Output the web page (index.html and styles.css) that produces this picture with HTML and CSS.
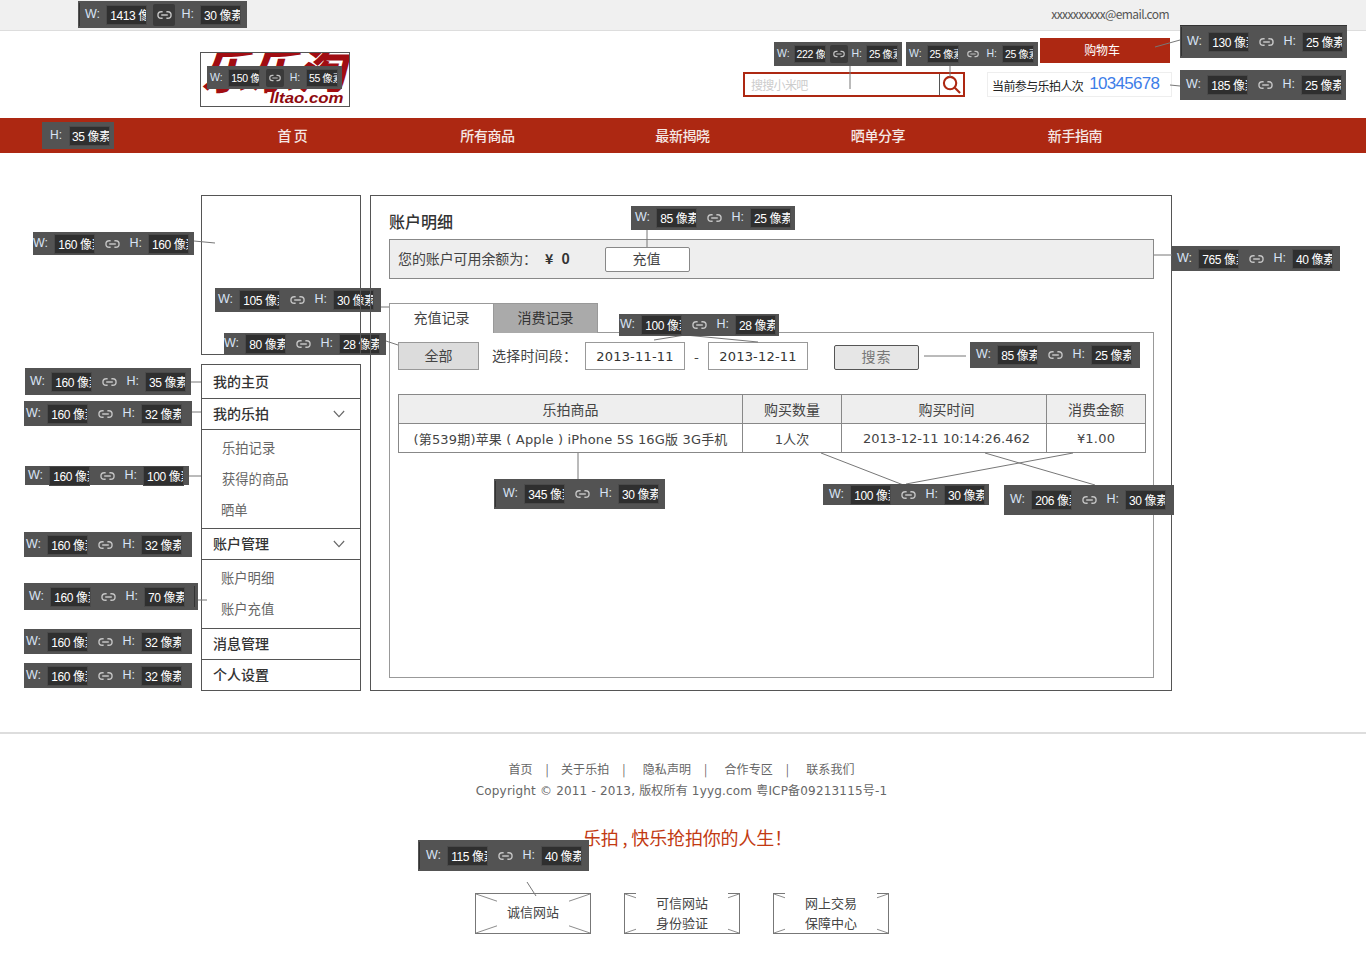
FILE: index.html
```html
<!DOCTYPE html>
<html lang="zh-CN">
<head>
<meta charset="utf-8">
<title>账户明细</title>
<link rel="stylesheet" href="styles.css">
</head>
<body>
<div class="page">
  <div class="topbar"><span class="email">xxxxxxxxxx@email.com</span></div>

  <header class="header">
    <div class="logo"><span class="logo-cn">乐乐淘</span><span class="logo-en">lltao.com</span></div>
    <div class="header-right">
      <div class="cart">购物车</div>
      <div class="header-row">
        <div class="search">
          <span class="search-text">搜搜小米吧</span>
          <span class="search-btn">
            <svg class="search-icon" viewBox="0 0 20 20"><circle cx="8.5" cy="8.500" r="6.500"/><path d="M13.500 13.500L19 19"/></svg>
          </span>
        </div>
        <div class="counter"><span class="counter-label">当前参与乐拍人次</span><span class="counter-num">10345678</span></div>
      </div>
    </div>
  </header>

  <nav class="nav">
    <a class="nav-item">首 页</a>
    <a class="nav-item">所有商品</a>
    <a class="nav-item">最新揭晓</a>
    <a class="nav-item nav-shift1">晒单分享</a>
    <a class="nav-item nav-shift2">新手指南</a>
  </nav>

  <div class="content">
    <aside class="sidebar">
      <div class="avatar frame"></div>
      <div class="menu">
        <div class="menu-head menu-home"><span class="mt">我的主页</span></div>
        <div class="menu-head"><span class="mt">我的乐拍</span><svg class="chev" viewBox="0 0 14 9"><path d="M1 1l6 6.500L13 1"/></svg></div>
        <ul class="menu-list list-a">
          <li>乐拍记录</li>
          <li>获得的商品</li>
          <li class="li-tight">晒单</li>
        </ul>
        <div class="menu-head"><span class="mt">账户管理</span><svg class="chev" viewBox="0 0 14 9"><path d="M1 1l6 6.500L13 1"/></svg></div>
        <ul class="menu-list list-b">
          <li class="li-tight">账户明细</li>
          <li class="li-tight">账户充值</li>
        </ul>
        <div class="menu-head"><span class="mt">消息管理</span></div>
        <div class="menu-head menu-last"><span class="mt">个人设置</span></div>
      </div>
    </aside>

    <main class="main frame">
      <h1 class="title">账户明细</h1>
      <div class="balance">
        <span class="balance-label">您的账户可用余额为<span class="cc">：</span></span>
        <span class="balance-num">¥&nbsp;&nbsp;0</span>
        <button class="recharge">充值</button>
      </div>
      <div class="tabs">
        <div class="tab tab-on">充值记录</div>
        <div class="tab tab-off">消费记录</div>
      </div>
      <div class="panel">
        <div class="filter">
          <button class="all">全部</button>
          <span class="filter-label">选择时间段<span class="cc">：</span></span>
          <span class="date">2013-11-11</span>
          <span class="dash">-</span>
          <span class="date">2013-12-11</span>
          <button class="search-go">搜索</button>
        </div>
        <table class="records">
          <thead>
            <tr><th class="c1">乐拍商品</th><th class="c2">购买数量</th><th class="c3">购买时间</th><th class="c4">消费金额</th></tr>
          </thead>
          <tbody>
            <tr><td class="cell-name">(第539期)苹果 ( Apple ) iPhone 5S 16G版 3G手机</td><td>1人次</td><td class="cell-time">2013-12-11 10:14:26.462</td><td class="cell-money">¥1.00</td></tr>
          </tbody>
        </table>
      </div>
    </main>
  </div>

  <footer class="footer">
    <div class="foot-links">
      <a>首页</a><i class="sep sep-a">|</i><a>关于乐拍</a><i class="sep">|</i><a>隐私声明</a><i class="sep">|</i><a>合作专区</a><i class="sep">|</i><a>联系我们</a>
    </div>
    <p class="copy">Copyright © 2011 - 2013, 版权所有 1yyg.com 粤ICP备09213115号-1</p>
    <p class="slogan">乐拍 , 快乐抢拍你的人生！</p>
    <div class="trust">
      <div class="trust-box">
        <svg class="x" viewBox="0 0 116 41" preserveAspectRatio="none"><path d="M0 0L116 41M116 0L0 41"/></svg>
        <span class="trust-text t-wide">诚信网站</span>
      </div>
      <div class="trust-box">
        <svg class="x" viewBox="0 0 116 41" preserveAspectRatio="none"><path d="M0 0L116 41M116 0L0 41"/></svg>
        <span class="trust-text">可信网站<br>身份验证</span>
      </div>
      <div class="trust-box">
        <svg class="x" viewBox="0 0 116 41" preserveAspectRatio="none"><path d="M0 0L116 41M116 0L0 41"/></svg>
        <span class="trust-text">网上交易<br>保障中心</span>
      </div>
    </div>
  </footer>

  <!-- measurement overlay -->
  <svg class="wires" viewBox="0 0 1366 980">
    <path d="M850 66V89M950 66V77M1155 47L1180 40M1170 85L1180 86"/>
    <path d="M194 241L215 243M381 307H389M386 341L398 345M191 382H201M192 412H201M189 476H201M198 600H207"/>
    <path d="M647 230V247M1154 255H1172M924 356H966M654 340L685 335L758 342"/>
    <path d="M578 453V479M821 453L906 486M1073 453L906 484M985 453L1095 485M527 882L536 896"/>
  </svg>

  <div class="dim b-top edge"><span class="k">W:</span><span class="v">1413 像素</span><span class="lk on"><svg viewBox="0 0 16 10"><path d="M6 1.500H4.500a3.500 3.500 0 000 7H6M10 1.500h1.500a3.500 3.500 0 010 7H10M4.500 5h7"/></svg></span><span class="k">H:</span><span class="v">30 像素</span></div>
  <div class="dim tiny b-logo"><span class="k">W:</span><span class="v">150 像素</span><span class="lk on"><svg viewBox="0 0 16 10"><path d="M6 1.500H4.500a3.500 3.500 0 000 7H6M10 1.500h1.500a3.500 3.500 0 010 7H10M4.500 5h7"/></svg></span><span class="k">H:</span><span class="v">55 像素</span></div>
  <div class="dim tiny b-nav"><span class="k">H:</span><span class="v">35 像素</span></div>
  <div class="dim tiny b-s1"><span class="k">W:</span><span class="v">222 像素</span><span class="lk on"><svg viewBox="0 0 16 10"><path d="M6 1.500H4.500a3.500 3.500 0 000 7H6M10 1.500h1.500a3.500 3.500 0 010 7H10M4.500 5h7"/></svg></span><span class="k">H:</span><span class="v">25 像素</span></div>
  <div class="dim tiny b-s2"><span class="k">W:</span><span class="v">25 像素</span><span class="lk"><svg viewBox="0 0 16 10"><path d="M6 1.500H4.500a3.500 3.500 0 000 7H6M10 1.500h1.500a3.500 3.500 0 010 7H10M4.500 5h7"/></svg></span><span class="k">H:</span><span class="v">25 像素</span></div>
  <div class="dim b-cart edge edge-top"><span class="k">W:</span><span class="v">130 像素</span><span class="lk"><svg viewBox="0 0 16 10"><path d="M6 1.500H4.500a3.500 3.500 0 000 7H6M10 1.500h1.500a3.500 3.500 0 010 7H10M4.500 5h7"/></svg></span><span class="k">H:</span><span class="v">25 像素</span></div>
  <div class="dim b-count"><span class="k">W:</span><span class="v">185 像素</span><span class="lk"><svg viewBox="0 0 16 10"><path d="M6 1.500H4.500a3.500 3.500 0 000 7H6M10 1.500h1.500a3.500 3.500 0 010 7H10M4.500 5h7"/></svg></span><span class="k">H:</span><span class="v">25 像素</span></div>

  <div class="dim b-av"><span class="k">W:</span><span class="v">160 像素</span><span class="lk"><svg viewBox="0 0 16 10"><path d="M6 1.500H4.500a3.500 3.500 0 000 7H6M10 1.500h1.500a3.500 3.500 0 010 7H10M4.500 5h7"/></svg></span><span class="k">H:</span><span class="v">160 像素</span></div>
  <div class="dim under b-tab1"><span class="k">W:</span><span class="v">105 像素</span><span class="lk"><svg viewBox="0 0 16 10"><path d="M6 1.500H4.500a3.500 3.500 0 000 7H6M10 1.500h1.500a3.500 3.500 0 010 7H10M4.500 5h7"/></svg></span><span class="k">H:</span><span class="v">30 像素</span></div>
  <div class="dim under b-all"><span class="k">W:</span><span class="v">80 像素</span><span class="lk"><svg viewBox="0 0 16 10"><path d="M6 1.500H4.500a3.500 3.500 0 000 7H6M10 1.500h1.500a3.500 3.500 0 010 7H10M4.500 5h7"/></svg></span><span class="k">H:</span><span class="v">28 像素</span></div>
  <div class="dim b-m1"><span class="k">W:</span><span class="v">160 像素</span><span class="lk"><svg viewBox="0 0 16 10"><path d="M6 1.500H4.500a3.500 3.500 0 000 7H6M10 1.500h1.500a3.500 3.500 0 010 7H10M4.500 5h7"/></svg></span><span class="k">H:</span><span class="v">35 像素</span></div>
  <div class="dim b-m2"><span class="k">W:</span><span class="v">160 像素</span><span class="lk"><svg viewBox="0 0 16 10"><path d="M6 1.500H4.500a3.500 3.500 0 000 7H6M10 1.500h1.500a3.500 3.500 0 010 7H10M4.500 5h7"/></svg></span><span class="k">H:</span><span class="v">32 像素</span></div>
  <div class="dim b-m3"><span class="k">W:</span><span class="v">160 像素</span><span class="lk"><svg viewBox="0 0 16 10"><path d="M6 1.500H4.500a3.500 3.500 0 000 7H6M10 1.500h1.500a3.500 3.500 0 010 7H10M4.500 5h7"/></svg></span><span class="k">H:</span><span class="v">100 像素</span></div>
  <div class="dim b-m4"><span class="k">W:</span><span class="v">160 像素</span><span class="lk"><svg viewBox="0 0 16 10"><path d="M6 1.500H4.500a3.500 3.500 0 000 7H6M10 1.500h1.500a3.500 3.500 0 010 7H10M4.500 5h7"/></svg></span><span class="k">H:</span><span class="v">32 像素</span></div>
  <div class="dim b-m5 edge-right"><span class="k">W:</span><span class="v">160 像素</span><span class="lk"><svg viewBox="0 0 16 10"><path d="M6 1.500H4.500a3.500 3.500 0 000 7H6M10 1.500h1.500a3.500 3.500 0 010 7H10M4.500 5h7"/></svg></span><span class="k">H:</span><span class="v">70 像素</span></div>
  <div class="dim b-m6"><span class="k">W:</span><span class="v">160 像素</span><span class="lk"><svg viewBox="0 0 16 10"><path d="M6 1.500H4.500a3.500 3.500 0 000 7H6M10 1.500h1.500a3.500 3.500 0 010 7H10M4.500 5h7"/></svg></span><span class="k">H:</span><span class="v">32 像素</span></div>
  <div class="dim b-m7"><span class="k">W:</span><span class="v">160 像素</span><span class="lk"><svg viewBox="0 0 16 10"><path d="M6 1.500H4.500a3.500 3.500 0 000 7H6M10 1.500h1.500a3.500 3.500 0 010 7H10M4.500 5h7"/></svg></span><span class="k">H:</span><span class="v">32 像素</span></div>

  <div class="dim b-rc"><span class="k">W:</span><span class="v">85 像素</span><span class="lk"><svg viewBox="0 0 16 10"><path d="M6 1.500H4.500a3.500 3.500 0 000 7H6M10 1.500h1.500a3.500 3.500 0 010 7H10M4.500 5h7"/></svg></span><span class="k">H:</span><span class="v">25 像素</span></div>
  <div class="dim b-bal"><span class="k">W:</span><span class="v">765 像素</span><span class="lk"><svg viewBox="0 0 16 10"><path d="M6 1.500H4.500a3.500 3.500 0 000 7H6M10 1.500h1.500a3.500 3.500 0 010 7H10M4.500 5h7"/></svg></span><span class="k">H:</span><span class="v">40 像素</span></div>
  <div class="dim b-date"><span class="k">W:</span><span class="v">100 像素</span><span class="lk"><svg viewBox="0 0 16 10"><path d="M6 1.500H4.500a3.500 3.500 0 000 7H6M10 1.500h1.500a3.500 3.500 0 010 7H10M4.500 5h7"/></svg></span><span class="k">H:</span><span class="v">28 像素</span></div>
  <div class="dim b-go"><span class="k">W:</span><span class="v">85 像素</span><span class="lk"><svg viewBox="0 0 16 10"><path d="M6 1.500H4.500a3.500 3.500 0 000 7H6M10 1.500h1.500a3.500 3.500 0 010 7H10M4.500 5h7"/></svg></span><span class="k">H:</span><span class="v">25 像素</span></div>
  <div class="dim b-c1 edge"><span class="k">W:</span><span class="v">345 像素</span><span class="lk"><svg viewBox="0 0 16 10"><path d="M6 1.500H4.500a3.500 3.500 0 000 7H6M10 1.500h1.500a3.500 3.500 0 010 7H10M4.500 5h7"/></svg></span><span class="k">H:</span><span class="v">30 像素</span></div>
  <div class="dim b-c2"><span class="k">W:</span><span class="v">100 像素</span><span class="lk"><svg viewBox="0 0 16 10"><path d="M6 1.500H4.500a3.500 3.500 0 000 7H6M10 1.500h1.500a3.500 3.500 0 010 7H10M4.500 5h7"/></svg></span><span class="k">H:</span><span class="v">30 像素</span></div>
  <div class="dim b-c3"><span class="k">W:</span><span class="v">206 像素</span><span class="lk"><svg viewBox="0 0 16 10"><path d="M6 1.500H4.500a3.500 3.500 0 000 7H6M10 1.500h1.500a3.500 3.500 0 010 7H10M4.500 5h7"/></svg></span><span class="k">H:</span><span class="v">30 像素</span></div>
  <div class="dim b-foot edge"><span class="k">W:</span><span class="v">115 像素</span><span class="lk"><svg viewBox="0 0 16 10"><path d="M6 1.500H4.500a3.500 3.500 0 000 7H6M10 1.500h1.500a3.500 3.500 0 010 7H10M4.500 5h7"/></svg></span><span class="k">H:</span><span class="v">40 像素</span></div>
</div>
</body>
</html>
```
FILE: styles.css
```css
* { box-sizing: border-box; }
html, body { margin: 0; padding: 0; background: #fff; }
body { font-family: "Noto Sans CJK SC", "Liberation Sans", sans-serif; color: #444; font-size: 14px; }
.page { position: relative; width: 1366px; min-height: 980px; overflow: hidden; }

/* top bar */
.topbar { height: 31px; background: #f0f0f0; border-bottom: 1px solid #ddd; display: flex; justify-content: flex-end; align-items: center; padding-right: 197px; padding-bottom: 3px; }
.email { font-size: 12px; letter-spacing: -0.6px; color: #555; }

/* header */
.header { height: 87px; display: flex; padding-left: 200px; padding-right: 194px; justify-content: space-between; }
.logo { position: relative; width: 150px; height: 55px; margin-top: 21px; border: 1px solid #555; overflow: hidden; }
.logo-cn { position: absolute; left: 0; top: -19px; font-size: 48px; line-height: 68px; font-weight: 900; font-style: italic; color: #a10d12; white-space: nowrap; }
.logo-en { position: absolute; right: 6px; bottom: 1px; padding-left: 2px; background: #fff; font-family: "Liberation Sans", sans-serif; font-size: 14px; line-height: 13px; font-weight: 700; font-style: italic; color: #8f0a0f; transform: scaleX(1.2); transform-origin: right; }
.header-right { width: 429px; padding-top: 7px; }
.cart { width: 130px; height: 25px; margin-left: 297px; padding-right: 6px; background: #ad2812; color: #fff; font-size: 12px; letter-spacing: -0.2px; line-height: 23px; text-align: center; }
.header-row { display: flex; justify-content: space-between; margin-top: 9px; }
.search { width: 222px; height: 25px; border: 2px solid #ad2812; display: flex; align-items: center; justify-content: space-between; }
.search-text { padding-left: 6px; font-size: 12px; letter-spacing: -0.7px; color: #ccc; }
.search-btn { width: 24px; height: 21px; border-left: 1px solid #555; display: flex; align-items: center; justify-content: center; }
.search-icon { width: 19px; height: 19px; fill: none; stroke: #ad2812; stroke-width: 2.200; }
.counter { width: 185px; height: 25px; border: 1px solid #eee; display: flex; align-items: center; padding-left: 4px; white-space: nowrap; }
.counter-label { font-size: 12px; letter-spacing: -0.6px; color: #222; padding-top: 1px; }
.counter-num { margin-left: 6px; font-family: "Liberation Sans", sans-serif; font-size: 17px; letter-spacing: -0.7px; line-height: 20px; color: #3d7de8; position: relative; top: -1px; }

/* nav */
.nav { height: 35px; background: #ad2812; display: flex; padding-left: 195px; }
.nav-item { width: 195px; text-align: center; line-height: 35px; font-size: 14px; font-weight: 500; letter-spacing: -0.4px; color: #f5e8e5; }
.nav-shift1 { width: 196px; }
.nav-shift2 { width: 198px; }

/* content */
.content { display: flex; padding-left: 201px; margin-top: 42px; gap: 9px; }
.frame { position: relative; z-index: 2; }
.sidebar { width: 160px; }
.avatar { height: 160px; border: 1px solid #555; margin-bottom: 9px; }
.menu { border: 1px solid #555; height: 327px; }
.menu-head { height: 31px; padding-left: 11px; border-bottom: 1px solid #555; display: flex; align-items: center; justify-content: space-between; padding-right: 15px; font-size: 14px; font-weight: 500; color: #333; }
.mt { line-height: 26px; position: relative; top: -1px; }
.menu-home { height: 34px; }
.menu-last { height: 30px; border-bottom: 0; }
.chev { width: 12px; height: 8px; fill: none; stroke: #666; stroke-width: 1.300; }
.menu-list { list-style: none; margin: 0; padding: 3px 0 0 20px; border-bottom: 1px solid #555; }
.list-a { height: 99px; }
.list-b { height: 69px; }
.menu-list li { height: 31px; line-height: 29px; font-size: 13.300px; color: #666; }
.li-tight { margin-left: -1px; }

.main { width: 802px; height: 496px; border: 1px solid #555; padding: 0 17px 0 18px; }
.title { height: 43px; margin: 0; padding-top: 9px; line-height: 33px; font-size: 16px; font-weight: 500; color: #333; }
.balance { height: 40px; border: 1px solid #888; background: #eee; display: flex; align-items: center; padding-left: 8px; color: #444; }
.balance-label { font-size: 14px; width: 147px; white-space: nowrap; letter-spacing: -0.1px; padding-bottom: 2px; }
.cc { font-family: "Noto Sans CJK TC", sans-serif; }
.balance-num { font-size: 14px; font-weight: 700; width: 60px; color: #333; word-spacing: 1px; padding-bottom: 2px; }
.recharge { width: 85px; height: 25px; border: 1px solid #888; border-radius: 2px; background: #fff; font: inherit; color: #444; padding: 0 2px 2px 0; }
.tabs { display: flex; margin-top: 24px; height: 30px; }
.tab { width: 104px; height: 30px; border: 1px solid #999; border-bottom: 0; text-align: center; line-height: 27px; font-size: 14px; color: #444; }
.tab-on { border-right: 0; background: #fff; }
.tab-off { width: 105px; background: #aaa; color: #333; }
.panel { height: 346px; margin-top: -1px; border: 1px solid #999; padding: 9px 0 0 8px; }
.filter { display: flex; align-items: center; height: 28px; }
.all { width: 81px; height: 28px; border: 1px solid #999; background: #dcdcdc; font: inherit; color: #444; padding: 0 0 2px; }
.filter-label { margin-left: 13px; width: 93px; white-space: nowrap; color: #444; letter-spacing: 0.2px; padding-bottom: 2px; }
.date { width: 100px; height: 28px; border: 1px solid #999; text-align: center; line-height: 27px; font-family: "DejaVu Sans", sans-serif; font-size: 13px; letter-spacing: 0.2px; color: #333; }
.dash { width: 23px; text-align: center; color: #444; }
.search-go { margin-left: 26px; margin-top: 2px; width: 85px; height: 25px; border: 1px solid #555; border-radius: 2px; background: #e6e6e6; font: inherit; color: #777; padding: 0 0 2px; letter-spacing: 1px; }

.records { margin-top: 24px; width: 748px; border-collapse: collapse; table-layout: fixed; }
.records th, .records td { height: 29px; border: 1px solid #888; text-align: center; font-size: 14px; font-weight: 400; color: #444; padding: 0; white-space: nowrap; font-family: "DejaVu Sans", "Noto Sans CJK SC", sans-serif; }
.records td { font-size: 13px; letter-spacing: 0.1px; }
.records th { background: #eee; font-family: "Noto Sans CJK SC", sans-serif; padding-bottom: 1px; }
.records .c3, .records .cell-time { padding-left: 5px; letter-spacing: 0; }
.records .cell-name { letter-spacing: 0.17px; }
.records .cell-money { letter-spacing: 0.2px; padding-top: 0; }
.c1 { width: 344px; }
.c2 { width: 99px; }
.c3 { width: 205px; }
.c4 { width: 99px; }

/* footer */
.footer { margin-top: 41px; border-top: 2px solid #ddd; padding-top: 22px; padding-bottom: 46px; }
.foot-links { height: 24px; display: flex; justify-content: center; align-items: center; padding-right: 3px; font-size: 12px; color: #666; letter-spacing: 0.1px; }
.sep { font-style: normal; margin: 0 17px 0 13px; }
.sep-a { margin-right: 12px; }
.copy { margin: 0; height: 22px; line-height: 22px; text-align: center; font-family: "DejaVu Sans", "Noto Sans CJK SC", sans-serif; font-size: 12px; letter-spacing: 0.18px; color: #666; padding-right: 3px; }
.slogan { margin: 23px 0 0; height: 24px; line-height: 24px; text-align: center; font-size: 18px; letter-spacing: -0.15px; color: #c23a12; padding-left: 9px; }
.trust { display: flex; justify-content: center; gap: 33px; margin-top: 44px; padding-right: 2px; }
.trust-box { position: relative; width: 116px; height: 41px; border: 1px solid #777; display: flex; align-items: center; justify-content: center; }
.x { position: absolute; inset: 0; width: 100%; height: 100%; fill: none; stroke: #888; stroke-width: 1; }
.trust-text { position: relative; top: -1px; background: #fff; padding: 0 20px; font-size: 13px; line-height: 20px; text-align: center; color: #444; }
.t-wide { padding: 0 10px; height: 29px; line-height: 27px; }

/* measurement overlay */
.wires { position: absolute; left: 0; top: 0; width: 1366px; height: 980px; z-index: 3; fill: none; stroke: #777; stroke-width: 1; pointer-events: none; }
.dim { position: absolute; z-index: 4; display: flex; align-items: center; justify-content: space-between; padding: 0 6px 0 5px; background: #535353; font-family: "Liberation Sans", "Noto Sans CJK SC", sans-serif; font-size: 12px; }
.dim.under { z-index: 1; }
.k { color: #d8e4f5; font-size: 12.500px; font-weight: 400; position: relative; top: -1px; }
.v { width: 41px; height: 20px; background: #2f2f2f; border: 1px solid #4a4a4a; color: #fff; line-height: 20px; padding-left: 3px; overflow: hidden; white-space: nowrap; letter-spacing: -0.4px; }
.lk { width: 22px; height: 22px; display: flex; align-items: center; justify-content: center; border-radius: 2px; }
.lk svg { width: 15px; height: 10px; fill: none; stroke: #c4c4c4; stroke-width: 1.500; }
.lk.on { background: #3a3a3a; }
.edge::before { content: ""; position: absolute; left: 1px; top: 2px; bottom: 2px; width: 1px; background: #333; }
.edge-top::after { content: ""; position: absolute; left: 0; right: 0; top: 0; height: 1px; background: #333; }
.edge-right::after { content: ""; position: absolute; right: 3px; top: 3px; bottom: 3px; width: 1px; background: #333; }
.tiny { font-size: 10.500px; padding: 0 4px 0 3px; }
.tiny .k { font-size: 10.500px; }
.tiny .v { width: 32px; height: 18px; line-height: 17px; padding-left: 2px; font-size: 10.500px; }
.tiny .lk { width: 18px; height: 18px; }
.tiny .lk svg { width: 12px; height: 8px; }

.b-top { left: 78px; top: 1px; width: 169px; height: 27px; padding-left: 7px; }
.b-logo { left: 207px; top: 66px; width: 135px; height: 23px; }
.b-nav { left: 42px; top: 122px; width: 72px; height: 27px; padding: 0 4px 0 8px; }
.b-nav .v { width: 41px; height: 20px; font-size: 12px; line-height: 20px; }
.b-nav .k { font-size: 12px; }
.b-s1 { left: 774px; top: 42px; width: 128px; height: 24px; }
.b-s2 { left: 906px; top: 42px; width: 132px; height: 24px; }
.b-cart { left: 1180px; top: 25px; width: 167px; height: 33px; padding: 0 4px 0 7px; }
.b-count { left: 1180px; top: 70px; width: 166px; height: 30px; padding: 0 4px 0 6px; }
.b-av { left: 33px; top: 232px; width: 161px; height: 23px; padding: 0 5px 0 0; }
.b-tab1 { left: 215px; top: 288px; width: 166px; height: 24px; padding: 0 7px 0 3px; }
.b-all { left: 224px; top: 333px; width: 162px; height: 22px; padding: 0 6px 0 0; }
.b-m1 { left: 25px; top: 368px; width: 166px; height: 27px; padding: 0 5px; }
.b-m2 { left: 24px; top: 401px; width: 168px; height: 25px; padding: 0 10px 0 2px; }
.b-m3 { left: 25px; top: 466px; width: 164px; height: 19px; padding: 0 5px 0 3px; }
.b-m4 { left: 24px; top: 532px; width: 168px; height: 25px; padding: 0 10px 0 2px; }
.b-m5 { left: 24px; top: 583px; width: 174px; height: 27px; padding: 0 13px 0 5px; }
.b-m6 { left: 24px; top: 629px; width: 168px; height: 25px; padding: 0 10px 0 2px; }
.b-m7 { left: 24px; top: 663px; width: 168px; height: 25px; padding: 0 10px 0 2px; }
.b-rc { left: 631px; top: 206px; width: 164px; height: 24px; padding: 0 4px; }
.b-bal { left: 1172px; top: 246px; width: 168px; height: 25px; padding: 0 7px 0 5px; }
.b-date { left: 619px; top: 314px; width: 160px; height: 22px; padding: 0 3px 0 1px; }
.b-go { left: 970px; top: 342px; width: 170px; height: 26px; padding: 0 8px 0 6px; }
.b-c1 { left: 494px; top: 479px; width: 171px; height: 30px; padding: 0 6px 0 9px; }
.b-c2 { left: 823px; top: 484px; width: 166px; height: 21px; padding: 0 4px 0 6px; }
.b-c3 { left: 1004px; top: 485px; width: 170px; height: 30px; padding: 0 8px 0 6px; }
.b-foot { left: 418px; top: 840px; width: 171px; height: 31px; padding: 0 7px 0 8px; }
```
